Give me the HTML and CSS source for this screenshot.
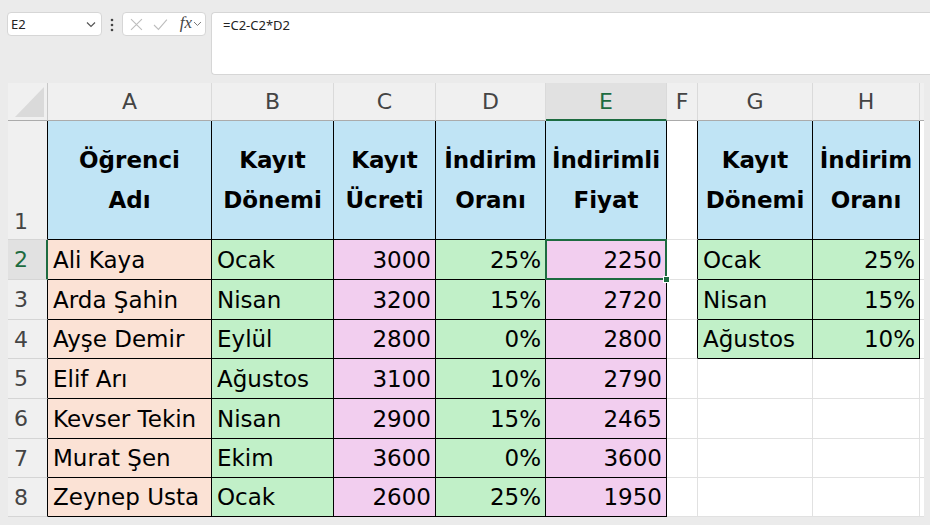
FILE: index.html
```html
<!DOCTYPE html>
<html lang="tr">
<head>
    <meta charset="UTF-8">
    <meta name="viewport" content="width=device-width, initial-scale=1.0">
    <title>Kayıt Ücretleri</title>
    <link rel="stylesheet" href="styles.css">
</head>
<body>
    <div class="fbar">
        <div class="namebox">
            <span>E2</span>
            <svg width="10" height="7" viewBox="0 0 10 7"><path d="M1 1.5 L5 5.5 L9 1.5" fill="none" stroke="#555" stroke-width="1.2"/></svg>
        </div>
        <svg class="kebab" width="4" height="14" viewBox="0 0 4 14">
            <circle cx="2" cy="2" r="1.3" fill="#444"/>
            <circle cx="2" cy="7" r="1.3" fill="#444"/>
            <circle cx="2" cy="12" r="1.3" fill="#444"/>
        </svg>
        <div class="fxbox">
            <svg width="13" height="13" viewBox="0 0 13 13"><path d="M1 1 L12 12 M12 1 L1 12" stroke="#bdbdbd" stroke-width="1.1" fill="none"/></svg>
            <svg width="15" height="13" viewBox="0 0 15 13"><path d="M1 7 L5.5 11.5 L14 1.5" stroke="#bdbdbd" stroke-width="1.1" fill="none"/></svg>
            <span class="fx">fx</span>
            <svg width="9" height="6" viewBox="0 0 9 6"><path d="M1 1 L4.5 4.5 L8 1" fill="none" stroke="#777" stroke-width="1"/></svg>
        </div>
        <div class="formula">=C2-C2*D2</div>
    </div>

    <table class="sheet">
        <colgroup>
            <col class="w-rh"><col class="w-a"><col class="w-b"><col class="w-c"><col class="w-d">
            <col class="w-e"><col class="w-f"><col class="w-g"><col class="w-h"><col class="w-i">
        </colgroup>
        <tr class="hdr">
            <th class="corner"><span class="tri"></span></th>
            <th>A</th><th>B</th><th>C</th><th>D</th><th class="active">E</th>
            <th>F</th><th>G</th><th>H</th><th class="stub"></th>
        </tr>
        <tr class="r1">
            <td class="rh bot">1</td>
            <td class="b blue head">Öğrenci<br>Adı</td>
            <td class="b blue head">Kayıt<br>Dönemi</td>
            <td class="b blue head">Kayıt<br>Ücreti</td>
            <td class="b blue head">İndirim<br>Oranı</td>
            <td class="b blue head">İndirimli<br>Fiyat</td>
            <td class="fr"></td>
            <td class="b blue head">Kayıt<br>Dönemi</td>
            <td class="b blue head">İndirim<br>Oranı</td>
            <td class="stub"></td>
        </tr>
        <tr class="row">
            <td class="rh active">2</td>
            <td class="b peach">Ali Kaya</td>
            <td class="b green">Ocak</td>
            <td class="b pink num">3000</td>
            <td class="b green num">25%</td>
            <td class="b pink num sel">2250</td>
            <td class="fr"></td>
            <td class="b green">Ocak</td>
            <td class="b green num">25%</td>
            <td class="stub"></td>
        </tr>
        <tr class="row">
            <td class="rh">3</td>
            <td class="b peach">Arda Şahin</td>
            <td class="b green">Nisan</td>
            <td class="b pink num">3200</td>
            <td class="b green num">15%</td>
            <td class="b pink num">2720</td>
            <td class="fr"></td>
            <td class="b green">Nisan</td>
            <td class="b green num">15%</td>
            <td class="stub"></td>
        </tr>
        <tr class="row short">
            <td class="rh">4</td>
            <td class="b peach">Ayşe Demir</td>
            <td class="b green">Eylül</td>
            <td class="b pink num">2800</td>
            <td class="b green num">0%</td>
            <td class="b pink num">2800</td>
            <td class="fr"></td>
            <td class="b green">Ağustos</td>
            <td class="b green num">10%</td>
            <td class="stub"></td>
        </tr>
        <tr class="row">
            <td class="rh">5</td>
            <td class="b peach">Elif Arı</td>
            <td class="b green">Ağustos</td>
            <td class="b pink num">3100</td>
            <td class="b green num">10%</td>
            <td class="b pink num">2790</td>
            <td></td><td></td><td></td>
            <td class="stub"></td>
        </tr>
        <tr class="row">
            <td class="rh">6</td>
            <td class="b peach">Kevser Tekin</td>
            <td class="b green">Nisan</td>
            <td class="b pink num">2900</td>
            <td class="b green num">15%</td>
            <td class="b pink num">2465</td>
            <td></td><td></td><td></td>
            <td class="stub"></td>
        </tr>
        <tr class="row short">
            <td class="rh">7</td>
            <td class="b peach">Murat Şen</td>
            <td class="b green">Ekim</td>
            <td class="b pink num">3600</td>
            <td class="b green num">0%</td>
            <td class="b pink num">3600</td>
            <td></td><td></td><td></td>
            <td class="stub"></td>
        </tr>
        <tr class="row short">
            <td class="rh">8</td>
            <td class="b peach">Zeynep Usta</td>
            <td class="b green">Ocak</td>
            <td class="b pink num">2600</td>
            <td class="b green num">25%</td>
            <td class="b pink num">1950</td>
            <td></td><td></td><td></td>
            <td class="stub"></td>
        </tr>
    </table>
</body>
</html>
```

FILE: styles.css
```css
body {
    margin: 0;
    background-color: #ebebeb;
    font-family: "DejaVu Sans", sans-serif;
}

/* formula bar */
.fbar {
    display: flex;
    align-items: flex-start;
    padding: 12px 0 0 7px;
    height: 71px;
    box-sizing: border-box;
}
.namebox {
    width: 95px;
    height: 24px;
    box-sizing: border-box;
    display: flex;
    align-items: center;
    justify-content: space-between;
    padding: 0 5px 0 3px;
    background-color: #fff;
    border: 1px solid #d6d6d6;
    border-radius: 4px;
    font-family: "Noto Sans", sans-serif;
    font-size: 13px;
    color: #222;
}
.kebab {
    margin: 6px 8px 0 8px;
}
.fxbox {
    width: 84px;
    height: 24px;
    box-sizing: border-box;
    display: flex;
    align-items: center;
    padding: 0 3px 0 7px;
    background-color: #fff;
    border: 1px solid #d6d6d6;
    border-radius: 4px;
}
.fxbox svg:nth-child(2) {
    margin-left: 10px;
}
.fx {
    font-family: "Liberation Serif", serif;
    font-style: italic;
    font-size: 17px;
    color: #444;
    margin: -3px 1px 0 12px;
}
.formula {
    flex: 1;
    height: 63px;
    box-sizing: border-box;
    margin-left: 5px;
    padding: 3px 11px;
    background-color: #fff;
    border: 1px solid #d6d6d6;
    border-right: none;
    border-radius: 4px 0 0 4px;
    font-family: "Noto Sans", sans-serif;
    font-size: 13px;
    color: #222;
}

/* grid */
.sheet {
    margin: 12px 0 0 8px;
    border-collapse: separate;
    border-spacing: 0;
    table-layout: fixed;
    width: 916px;
    font-size: 23px;
    color: #000;
}
.w-rh { width: 40px; }
.w-a { width: 164px; }
.w-b { width: 122px; }
.w-c { width: 102px; }
.w-d { width: 110px; }
.w-e { width: 121px; }
.w-f { width: 31px; }
.w-g { width: 115px; }
.w-h { width: 107px; }
.w-i { width: 4px; }

.hdr { height: 38px; }
.r1 { height: 119px; }
.row { height: 40px; }
.row.short { height: 39px; }

th {
    padding: 0;
    background-color: #f0f0f0;
    border-right: 1px solid #dadada;
    border-bottom: 1px solid #ababab;
    font-weight: normal;
    font-size: 22px;
    color: #444;
}
th.active {
    background-color: #e1e1e1;
    color: #1d6b40;
    border-bottom: 2px solid #1d6b40;
}
th.corner {
    position: relative;
    border-right-color: #c8c8c8;
}
.tri {
    position: absolute;
    left: 7px;
    bottom: 3px;
    width: 0;
    height: 0;
    border-left: 29px solid transparent;
    border-bottom: 30px solid #dadada;
}
th.stub { border-right: none; }

td {
    padding: 0 5px;
    background-color: #fff;
    border-right: 1px solid #e1e1e1;
    border-bottom: 1px solid #e1e1e1;
    white-space: nowrap;
}
td.rh {
    padding: 0 0 0 6px;
    background-color: #f0f0f0;
    border-right: 1px solid #000;
    border-bottom-color: #d5d5d5;
    font-size: 22px;
    color: #444;
}
td.rh.bot {
    vertical-align: bottom;
    padding-bottom: 5px;
}
td.rh.active {
    background-color: #e1e1e1;
    color: #1d6b40;
    border-right: 2px solid #1d6b40;
}
td.b {
    border-right-color: #000;
    border-bottom-color: #000;
}
td.fr { border-right-color: #000; }
td.stub {
    padding: 0;
    border-right: none;
    background-color: #fff;
}

.blue { background-color: #c0e4f5; }
.peach { background-color: #fbe2d5; }
.green { background-color: #c1f0c8; }
.pink { background-color: #f2ceef; }

.head {
    text-align: center;
    font-weight: bold;
    line-height: 40px;
    padding: 0;
}
.num {
    text-align: right;
    padding-right: 4px;
}

/* active cell */
td.sel {
    position: relative;
}
td.sel::before {
    content: "";
    position: absolute;
    left: -1px;
    top: -1px;
    right: -1px;
    bottom: -1px;
    border: 2px solid #1d6b40;
}
td.sel::after {
    content: "";
    position: absolute;
    right: -4px;
    bottom: -4px;
    width: 5px;
    height: 5px;
    background-color: #1d6b40;
    border: 1px solid #fff;
}
```
